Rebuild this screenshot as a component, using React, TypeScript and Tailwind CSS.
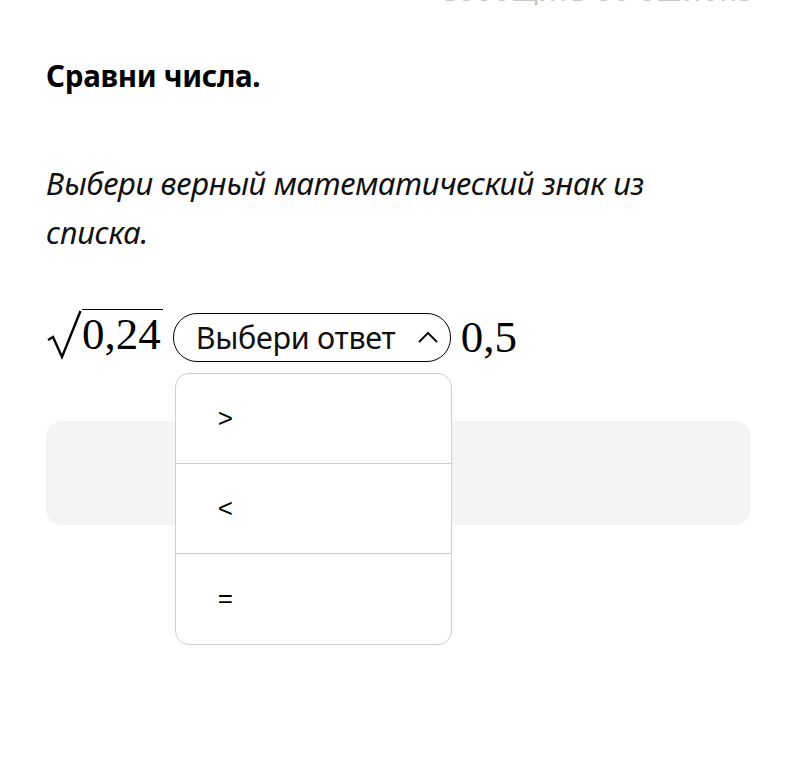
import React from "react";

export default function App() {
  const sans = { fontFamily: '"Noto Sans", "Open Sans", sans-serif' } as React.CSSProperties;
  const serif = { fontFamily: '"Liberation Serif", "DejaVu Serif", serif' } as React.CSSProperties;
  return (
    <div className="w-[797px] h-[762px] bg-white overflow-hidden relative" style={sans}>
      <div className="h-[8px] overflow-hidden flex items-end justify-end pr-[46px]">
        <span className="text-[30px] leading-[40px] text-[#c8c8c8] whitespace-nowrap -mb-[2px]">Сообщить об ошибке</span>
      </div>
      <div className="px-[46px]">
        <h1 className="mt-[48px] text-[29.5px] leading-[40px] font-bold text-black tracking-[-0.3px]">Сравни числа.</h1>
        <p className="mt-[63px] text-[31px] leading-[49px] italic text-[#111] w-[660px] tracking-[-0.3px]">
          Выбери верный математический знак из списка.
        </p>
        <div className="mt-[55px] flex items-center h-[50px] relative">
          <div className="flex items-start text-[45px] leading-none text-black" style={serif}>
            <svg width="36" height="52" viewBox="0 0 36 52" className="mt-[-4px]">
              <path d="M2 31 L7 28 L16 48 L34.5 2" fill="none" stroke="#000" strokeWidth="2.4" strokeLinejoin="miter" />
            </svg>
            <span className="border-t-[1.8px] border-black pt-[2px] pr-[2px] -mt-[4px]">0,24</span>
          </div>
          <div className="relative ml-[10px]">
            <button className="h-[49px] w-[278px] rounded-[24px] border-[1.5px] border-black flex items-center pl-[22px] pr-[11px] bg-white">
              <span className="text-[30.5px] text-[#111] leading-none tracking-[-0.3px]">Выбери ответ</span>
              <svg width="22" height="22" viewBox="0 0 22 22" className="ml-auto">
                <path d="M2 16 L11 7 L20 16" fill="none" stroke="#111" strokeWidth="2" />
              </svg>
            </button>
            <div className="absolute left-[2px] top-[60px] w-[277px] bg-white border border-[#cfcfcf] rounded-[14px] z-10 overflow-hidden">
              {[">", "<", "="].map((s, i) => (
                <div key={i} className={`h-[90px] flex items-center pl-[42px] text-[26px] text-black ${i < 2 ? "border-b border-[#cfcfcf]" : ""}`} style={{ fontFamily: '"Liberation Sans", Arial, sans-serif' }}>
                  {s}
                </div>
              ))}
            </div>
          </div>
          <span className="ml-[10px] text-[45px] text-black leading-none" style={serif}>0,5</span>
        </div>
        <div className="mt-[59px] h-[104px] rounded-[16px] bg-[#f4f4f4]"></div>
      </div>
    </div>
  );
}
